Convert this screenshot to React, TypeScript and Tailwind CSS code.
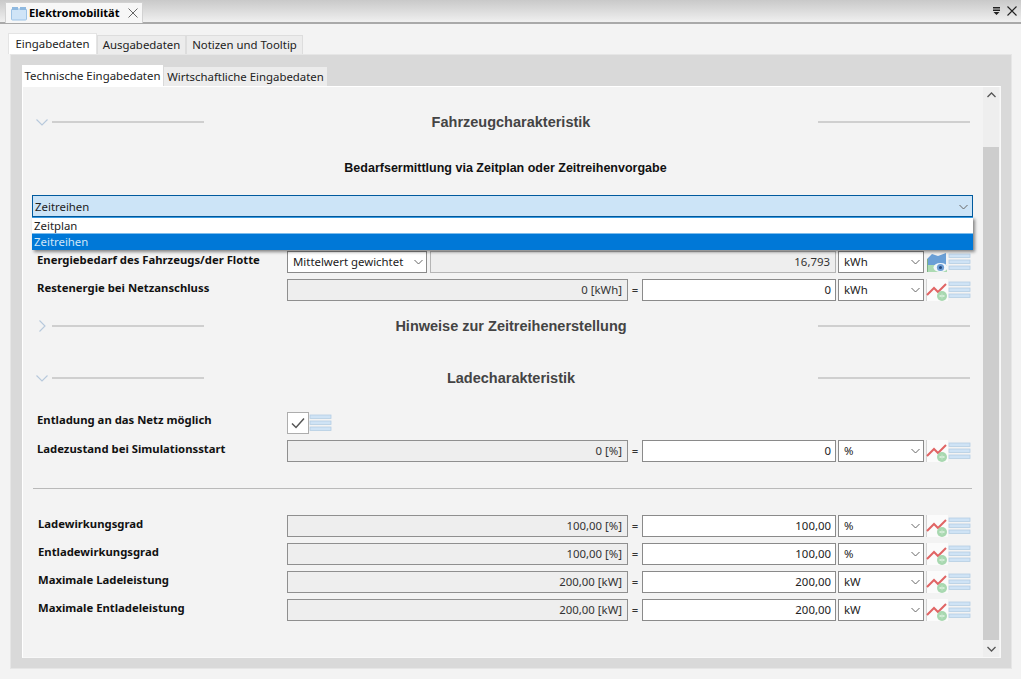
import React from "react";

const LinesIcon = () => (
  <svg width="23" height="20" viewBox="0 0 23 20" className="shrink-0">
    {[2, 8, 14].map((y) => (
      <rect key={y} x="1" y={y} width="21" height="3.4" fill="#cfe3f5" stroke="#b4cde3" strokeWidth="0.8" />
    ))}
  </svg>
);

const ChartIcon = () => (
  <svg width="22" height="22" viewBox="0 0 22 22" className="shrink-0">
    <rect x="0" y="0" width="22" height="22" fill="#fbfbfb" />
    <path d="M0.5 0V22" stroke="#d4d4d4" />
    <path d="M1 16L8 9L12 13L20 5" fill="none" stroke="#e06464" strokeWidth="2" />
    <circle cx="16" cy="17" r="5" fill="#a8d8b0" />
    <path d="M13.5 17H18.5" stroke="#f2fbf3" strokeWidth="1.2" />
    <path d="M16 14.5V19.5" stroke="#c4e6ca" strokeWidth="1" />
  </svg>
);

const AreaEyeIcon = () => (
  <svg width="22" height="22" viewBox="0 0 22 22" className="shrink-0">
    <path d="M1 8L6 3L12 5L20 2V14H1Z" fill="#6a9fd6" />
    <path d="M1 14H21V21H1Z" fill="#acdab2" />
    <path d="M1.5 8V21" stroke="#7fae85" strokeWidth="1" />
    <ellipse cx="14.5" cy="16.5" rx="7" ry="4.6" fill="#f2f7fb" />
    <circle cx="14.5" cy="16.5" r="3.6" fill="#6c9dd4" />
    <circle cx="14.5" cy="16.5" r="1.5" fill="#24477a" />
  </svg>
);

const Chevron = () => (
  <svg width="9" height="6" viewBox="0 0 9 6" className="shrink-0">
    <path d="M0.5 1L4.5 5L8.5 1" fill="none" stroke="#666" strokeWidth="1" />
  </svg>
);

const SectionHead = ({ title, open = true, className }: { title: string; open?: boolean; className: string }) => (
  <div className={`flex items-center h-5 ${className}`}>
    <div className="w-[20px] flex justify-center">
      {open ? (
        <svg width="12" height="7" viewBox="0 0 12 7">
          <path d="M0.5 0.5L6 6L11.5 0.5" fill="none" stroke="#b7c9dc" strokeWidth="1.1" />
        </svg>
      ) : (
        <svg width="7" height="12" viewBox="0 0 7 12">
          <path d="M0.5 0.5L6 6L0.5 11.5" fill="none" stroke="#b7c9dc" strokeWidth="1.1" />
        </svg>
      )}
    </div>
    <div className="w-[152px] h-[2px] bg-[#cfcfcf]" />
    <div className="w-[614px] pt-[2px] text-center text-[14.5px] font-bold text-[#444] font-['Liberation_Sans',sans-serif]">{title}</div>
    <div className="w-[152px] h-[2px] bg-[#cfcfcf]" />
  </div>
);

const UnitSelect = ({ unit }: { unit: string }) => (
  <div className="ml-[2px] w-[86px] h-[22px] bg-white border border-[#8a8a8a] flex items-center justify-between pl-[5px] pr-[3px] text-[11.4px] text-[#222]">
    <span>{unit}</span>
    <Chevron />
  </div>
);

const Row = ({ label, shown, value, unit, className, indent }: { label: string; shown: string; value: string; unit: string; className: string; indent?: boolean }) => (
  <div className={`flex items-center h-[22px] ${className}`}>
    <div className={`w-[255px] ${indent ? "pl-[6px]" : "pl-[5px]"} text-[11.3px] font-bold text-[#111] -mt-[4px]`}>{label}</div>
    <div className="w-[341px] h-[22px] bg-[#eeeeee] border border-[#8f8f8f] flex items-center justify-end pr-[5px] text-[11.4px] text-[#333]">{shown}</div>
    <div className="w-[14px] text-center text-[11.4px] text-[#333]">=</div>
    <div className="w-[194px] h-[22px] bg-white border border-[#8a8a8a] flex items-center justify-end pr-[4px] text-[11.4px] text-[#222]">{value}</div>
    <UnitSelect unit={unit} />
    <div className="ml-[2px]"><ChartIcon /></div>
    <LinesIcon />
  </div>
);

const App: React.FC = () => {
  return (
    <div className="w-[1021px] h-[679px] overflow-hidden bg-[#f3f3f3] flex flex-col font-['Noto_Sans','Open_Sans',sans-serif]">
      {/* view title bar */}
      <div className="h-[24px] shrink-0 flex items-end justify-between bg-gradient-to-b from-[#c9c9c9] to-[#f0f0f0] border-b-2 border-[#a9a9a9] pl-[5px] pr-[4px]">
        <div className="h-[21px] w-[138px] bg-[#f7f7f7] border border-b-0 border-[#d2d2d2] flex items-center pl-[5px] -mb-[1px]">
          <svg width="16" height="15" viewBox="0 0 16 15" className="shrink-0">
            <rect x="0.5" y="3" width="15" height="11" rx="1" fill="#cfe4f7" stroke="#9dc3e6" />
            <rect x="1" y="1" width="6" height="3" fill="#8fb9e0" />
            <rect x="9" y="1" width="6" height="3" fill="#8fb9e0" />
          </svg>
          <span className="ml-[2px] text-[11.1px] font-bold text-black whitespace-nowrap">Elektromobilität</span>
          <svg width="10" height="10" viewBox="0 0 10 10" className="ml-[9px] shrink-0">
            <path d="M0.5 0.5L9.5 9.5M9.5 0.5L0.5 9.5" stroke="#666" strokeWidth="1" />
          </svg>
        </div>
        <div className="flex items-center gap-[7px] h-[22px]">
          <svg width="7" height="8" viewBox="0 0 7 8">
            <path d="M0 0H7V1.5H0ZM0 2.5H7V4H0ZM0.5 5H6.5L3.5 8Z" fill="#222" />
          </svg>
          <svg width="10" height="10" viewBox="0 0 10 10">
            <path d="M0.5 0.5L9.5 9.5M9.5 0.5L0.5 9.5" stroke="#222" strokeWidth="1.1" />
          </svg>
        </div>
      </div>

      {/* outer tabs */}
      <div className="flex items-end h-[30px] shrink-0 pl-[8px] text-[11.4px] text-[#222]">
        <div className="h-[21px] w-[89px] bg-white border border-b-0 border-[#e4e4e4] flex items-center justify-center">Eingabedaten</div>
        <div className="h-[19px] w-[89px] bg-[#ececec] border border-b-0 border-[#dddddd] flex items-center justify-center">Ausgabedaten</div>
        <div className="h-[19px] w-[117px] bg-[#ececec] border border-b-0 border-[#dddddd] flex items-center justify-center">Notizen und Tooltip</div>
      </div>

      {/* outer panel */}
      <div className="mx-[10px] w-[1002px] h-[615px] shrink-0 border border-[#e6e6e6] bg-[#d9d9d9] pt-[10px] pl-[11px] pr-[10px] pb-[10px] flex flex-col">
        <div className="flex items-end h-[21px] shrink-0 text-[11.4px] text-[#222]">
          <div className="h-[21px] w-[141px] bg-white flex items-center justify-center whitespace-nowrap">Technische Eingabedaten</div>
          <div className="ml-px h-[19px] w-[163px] bg-[#ececec] flex items-center justify-center whitespace-nowrap">Wirtschaftliche Eingabedaten</div>
        </div>

        <div className="flex flex-1 min-h-0 bg-[#f3f3f3] border-t border-l border-r border-b border-t-white border-l-white border-r-[#f8f8f8] border-b-[#f8f8f8]">
          <div className="relative w-[960px] pl-[9px]">
            <SectionHead title="Fahrzeugcharakteristik" className="mt-[25px]" />
            <div className="mt-[26px] text-center text-[12.5px] font-bold text-[#111] leading-[20px] w-[947px] font-['Liberation_Sans',sans-serif]">Bedarfsermittlung via Zeitplan oder Zeitreihenvorgabe</div>

            {/* open combo */}
            <div className="relative mt-[17px] w-[941px]">
              <div className="h-[22px] bg-[#cce4f7] border border-[#005a9e] flex items-center justify-between pl-[2px] pr-[4px] pt-[2px] text-[11.4px] text-[#222]">
                <span>Zeitreihen</span>
                <Chevron />
              </div>
              <div className="absolute left-0 top-[22px] w-[941px] h-[33px] border-t border-[#3a9ae0] shadow-[2px_2px_3px_rgba(0,0,0,0.45)] z-10 text-[11.4px]">
                <div className="h-[16px] bg-white border-b border-[#7ebdec] pl-[2px] flex items-center text-[#222]">Zeitplan</div>
                <div className="h-[16px] bg-[#0078d7] pl-[2px] flex items-center text-[#cfe6f8]">Zeitreihen</div>
              </div>
            </div>

            <div className="flex items-center h-[22px] mt-[34px]">
              <div className="w-[255px] pl-[5px] text-[11.3px] font-bold text-[#111] -mt-[4px]">Energiebedarf des Fahrzeugs/der Flotte</div>
              <div className="w-[140px] h-[22px] bg-white border border-[#8a8a8a] flex items-center justify-between pl-[5px] pr-[3px] text-[11.4px] text-[#222]">
                <span>Mittelwert gewichtet</span>
                <Chevron />
              </div>
              <div className="ml-[3px] w-[406px] h-[22px] bg-[#eeeeee] border border-[#b5b5b5] flex items-center justify-end pr-[5px] text-[11.4px] text-[#333]">16,793</div>
              <UnitSelect unit="kWh" />
              <div className="ml-[2px]"><AreaEyeIcon /></div>
              <LinesIcon />
            </div>
            <Row label="Restenergie bei Netzanschluss" shown="0 [kWh]" value="0" unit="kWh" className="mt-[6px]" />

            <SectionHead title="Hinweise zur Zeitreihenerstellung" open={false} className="mt-[15px]" />
            <SectionHead title="Ladecharakteristik" className="mt-[32px]" />

            <div className="flex items-center h-[23px] mt-[23px]">
              <div className="w-[255px] pl-[5px] text-[11.3px] font-bold text-[#111] -mt-[4px]">Entladung an das Netz möglich</div>
              <div className="w-[22px] h-[22px] bg-white border border-[#adadad] flex items-center justify-center">
                <svg width="14" height="12" viewBox="0 0 14 12">
                  <path d="M1 6.5L5 10.5L13 1.5" fill="none" stroke="#555" strokeWidth="1.5" />
                </svg>
              </div>
              <LinesIcon />
            </div>
            <Row label="Ladezustand bei Simulationsstart" shown="0 [%]" value="0" unit="%" className="mt-[6px]" />

            <div className="mt-[26px] ml-[1px] w-[939px] h-px bg-[#b9b9b9]" />

            <Row indent label="Ladewirkungsgrad" shown="100,00 [%]" value="100,00" unit="%" className="mt-[26px]" />
            <Row indent label="Entladewirkungsgrad" shown="100,00 [%]" value="100,00" unit="%" className="mt-[6px]" />
            <Row indent label="Maximale Ladeleistung" shown="200,00 [kW]" value="200,00" unit="kW" className="mt-[6px]" />
            <Row indent label="Maximale Entladeleistung" shown="200,00 [kW]" value="200,00" unit="kW" className="mt-[6px]" />
          </div>

          {/* scrollbar */}
          <div className="w-[16px] bg-[#eeeeee] flex flex-col">
            <div className="h-[60px] flex justify-center pt-[5px]">
              <svg width="9" height="6" viewBox="0 0 9 6">
                <path d="M0.5 5L4.5 1L8.5 5" fill="none" stroke="#555" strokeWidth="1.3" />
              </svg>
            </div>
            <div className="flex-1 bg-[#cdcdcd]" />
            <div className="h-[17px] flex justify-center pt-[6px]">
              <svg width="9" height="6" viewBox="0 0 9 6">
                <path d="M0.5 1L4.5 5L8.5 1" fill="none" stroke="#555" strokeWidth="1.3" />
              </svg>
            </div>
          </div>
        </div>
      </div>
    </div>
  );
};

export default App;
